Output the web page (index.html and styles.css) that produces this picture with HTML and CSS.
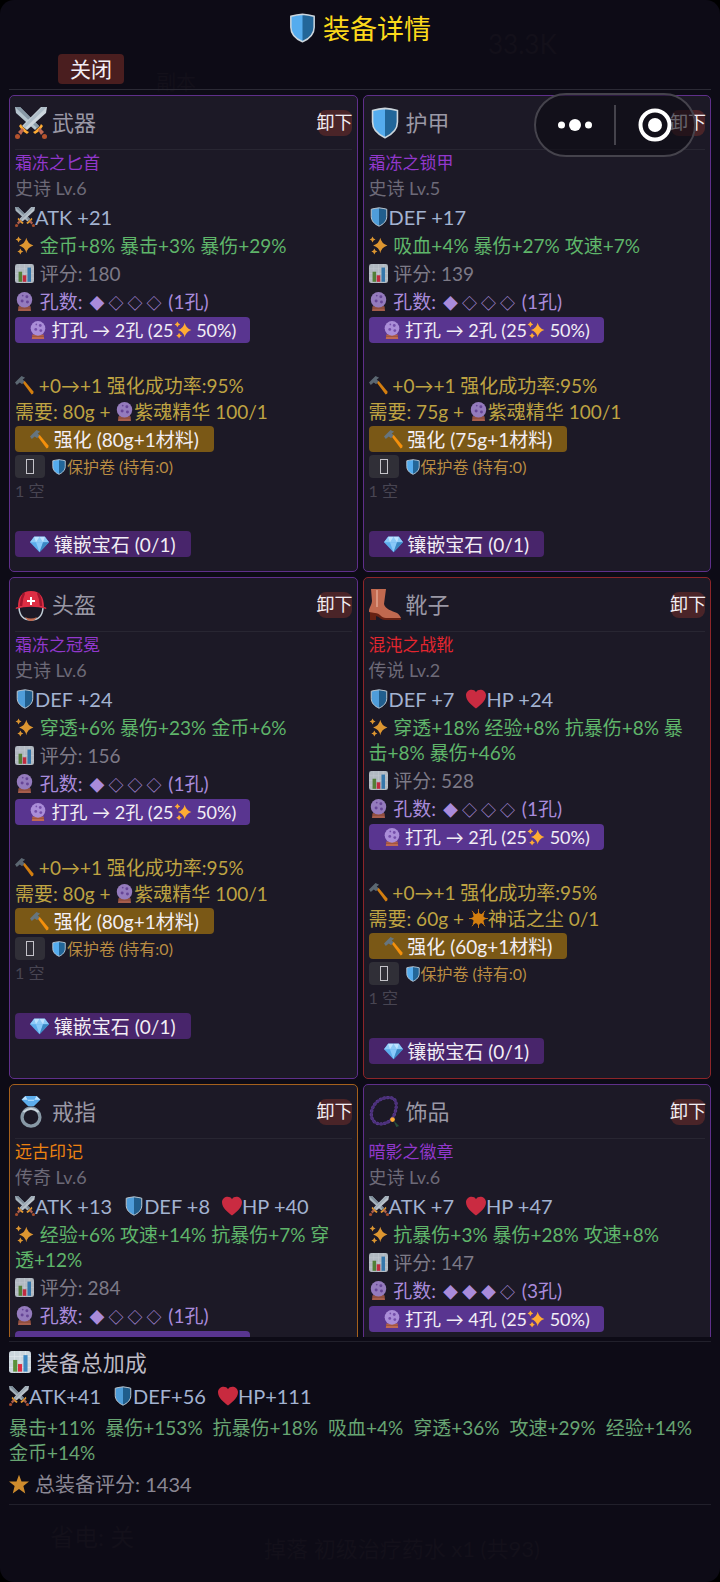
FILE: index.html
```html
<!DOCTYPE html>
<html lang="zh-CN">
<head>
<meta charset="utf-8">
<meta name="viewport" content="width=device-width, initial-scale=1">
<title>装备详情</title>
<link rel="stylesheet" href="styles.css">
</head>
<body>
<svg class="sprite" aria-hidden="true">
  <symbol id="shield" viewBox="0 0 32 36"><path d="M16 1.500C11 2 6 3 2 4v13c0 8 6 14 14 17.500C24 31 30 25 30 17V4c-4-1-9-2-14-2.500z" fill="#55acee"/><path d="M16 1.500V34.500C24 31 30 25 30 17V4c-4-1-9-2-14-2.500z" fill="#226699"/><path d="M16 1.500C11 2 6 3 2 4v13c0 8 6 14 14 17.500C24 31 30 25 30 17V4c-4-1-9-2-14-2.500z" fill="none" stroke="#ccd6dd" stroke-width="1.800"/></symbol>
  <symbol id="swords" viewBox="0 0 32 32"><path d="M0 0h5l19 19-4 4L1 6z" fill="#b5c5ce"/><path d="M0 0h5l19 19-2 2z" fill="#8899a6"/><path d="M18 25l2-1 5-5 1-2 2 2-2 3-3 3-3 2z" fill="#ffac33"/><path d="M23 23l2-2 4 4-3 3z" fill="#bf6952"/><circle cx="29.500" cy="29.500" r="2.500" fill="#b5522d"/><g transform="matrix(-1 0 0 1 32 0)"><path d="M0 0h6l19 19-5 4L1 6z" fill="#ccd6dd"/><path d="M0 0h5l19 19-2 2z" fill="#aebdc8"/><path d="M18 25l2-1 5-5 1-2 2 2-2 3-3 3-3 2z" fill="#ffac33"/><path d="M23 23l2-2 4 4-3 3z" fill="#bf6952"/><circle cx="29.500" cy="29.500" r="2.500" fill="#b5522d"/></g></symbol>
  <symbol id="helmet" viewBox="0 0 32 32"><path d="M4 19q1 12 12 12t12-12" fill="none" stroke="#c1cdd6" stroke-width="1.500"/><path d="M10 28q6 3 12 0-2 4-6 4t-6-4z" fill="#c1694f"/><path d="M3 18C3 8 7 2 16 2s13 6 13 16c2 0 3 1 2 2-9-3-21-3-30 0-1-1 0-2 2-2z" fill="#dd2e44"/><path d="M9 4c-2 4-3 8-3 13m17-13c2 4 3 8 3 13" stroke="#a0142c" stroke-width="2.500" fill="none"/><path d="M16 8v8M12 12h8" stroke="#fff" stroke-width="2"/></symbol>
  <symbol id="boot" viewBox="0 0 32 32"><path d="M1 18l15 2c3 3 8 5 12 6 3 1 4 2 4 5H16c-4 0-5-3-9-4v4H1z" fill="#662113"/><path d="M2 0q8-1 15 0l-2 15c1 5 8 7 13 9 2 1 3 3 4 5H17c-5 0-6-5-11-5l-6-1c-1-3 3-7 3-11z" fill="#c1694f"/><path d="M8 1v17" stroke="#e0a48e" stroke-width="1.500"/></symbol>
  <symbol id="ring" viewBox="0 0 32 34"><circle cx="16" cy="22.500" r="9.500" fill="none" stroke="#8899a6" stroke-width="3.500"/><path d="M8 17q8-7 16 0" fill="none" stroke="#ccd6dd" stroke-width="2"/><path d="M10 0h12l4 4-7 7h-6L6 4z" fill="#5dadec"/><path d="M10 0l3 5h6l3-5 4 4H6z" fill="#bde3ff"/></symbol>
  <symbol id="beads" viewBox="0 0 32 34"><path d="M23 25C12 34 1 29 1.500 19 2 7 13 0 23 2c8 2 5 16 0 23z" fill="none" stroke="#5e3d96" stroke-width="3.500" stroke-linecap="round" stroke-dasharray=".5 3.500"/><path d="M23 25C12 34 1 29 1.500 19 2 7 13 0 23 2c8 2 5 16 0 23z" fill="none" stroke="#4b307a" stroke-width="2"/><path d="M25 26l6 6-3 1z" fill="#28513c"/><circle cx="24" cy="25" r="2.500" fill="#ffac33"/></symbol>
  <symbol id="heart" viewBox="0 0 32 32"><path d="M16 31C9 26 0 19 0 10 0 1 12-2 16 5c4-7 16-4 16 5 0 9-9 16-16 21z" fill="#dd2e44"/></symbol>
  <symbol id="sparkle" viewBox="0 0 32 32"><path d="M19 3q2 10 12 13-10 3-12 13-2-10-12-13Q17 13 19 3zM6 1q1 4 5 5-4 1-5 5-1-4-5-5 4-1 5-5zM9 21q1 4 5 5-4 1-5 5-1-4-5-5 4-1 5-5z" fill="#ffac33"/></symbol>
  <symbol id="chart" viewBox="0 0 32 32"><rect width="32" height="32" rx="4" fill="#ccd6dd"/><path d="M0 8h32M0 16h32M0 24h32M8 0v32M16 0v32M24 0v32" stroke="#e1e8ed"/><path d="M6 13h6v17H6z" fill="#5c913b"/><path d="M13 19h6v11h-6z" fill="#dd2e44"/><path d="M21 6h6v24h-6z" fill="#3b88c3"/></symbol>
  <symbol id="orb" viewBox="0 0 32 32"><path d="M6 24h20l1 8H5z" fill="#bf6952"/><path d="M5 27h22" stroke="#8a4633" stroke-width="1.500"/><circle cx="16" cy="13" r="13" fill="#aa8dd8"/><circle cx="12" cy="15" r="2.500" fill="#744eaa"/><circle cx="20" cy="8" r="2.500" fill="#744eaa"/><circle cx="21" cy="17" r="2.500" fill="#744eaa"/><circle cx="13" cy="6" r="1.500" fill="#744eaa"/></symbol>
  <symbol id="hammer" viewBox="0 0 32 32"><path d="M13 11l3-3 15 18q1 4-3 5z" fill="#f4900c"/><path d="M0 11l5-5 6-6 6 3-4 3 3 3-4 5-4-3-5 4z" fill="#66757f"/></symbol>
  <symbol id="gem" viewBox="0 0 32 28"><path d="M7 1h18l7 9-16 17L0 10z" fill="#5dadec"/><path d="M7 1h18l7 9H0z" fill="#8ccaf7"/><path d="M7 1l3 9 6-9 6 9 3-9z" fill="#bde3ff"/><path d="M10 10h12l-6 17z" fill="#88c9f9"/><path d="M22 10h10L16 27z" fill="#3b88c3"/></symbol>
  <symbol id="star" viewBox="0 0 32 32"><path d="M16 1l4 11 12 0-9 7 3 12-10-7-10 7 3-12-9-7 12 0z" fill="#ffac33"/></symbol>
  <symbol id="burst" viewBox="0 0 32 32"><circle cx="16" cy="16" r="9" fill="#f4900c"/><path d="M16 4l3 6 7-4-2 7 6 3-6 3 2 7-7-3-3 6-3-6-7 3 2-7-6-3 6-3-2-7 7 4z" fill="#f4900c"/><path d="M16 0v32M0 16h32M5 3l22 26M27 3L5 29" stroke="#f4900c" stroke-width="1.500"/></symbol>
</svg>

<main class="app">
  <div class="backdrop" aria-hidden="true">
    <span class="ghost ghost-gold">33.3K</span>
    <span class="ghost ghost-tab">副本</span>
    <span class="ghost ghost-power">省电: 关</span>
    <span class="ghost ghost-log">掉落 初级治疗药水 x1 (共93)</span>
  </div>

  <header class="top">
    <h1 class="title"><svg class="icon"><use href="#shield"/></svg> 装备详情</h1>
    <button class="close" type="button">关闭</button>
  </header>

  <section class="list">
    <article class="card epic">
      <header class="head"><svg class="slot"><use href="#swords"/></svg><h2 class="kind">武器</h2><button class="unequip" type="button">卸下</button></header>
      <h3 class="name">霜冻之匕首</h3>
      <p class="level">史诗 Lv.6</p>
      <p class="stats"><span><svg class="icon"><use href="#swords"/></svg>ATK +21</span></p>
      <p class="affix"><svg class="icon"><use href="#sparkle"/></svg> 金币+8% 暴击+3% 暴伤+29%</p>
      <p class="score"><svg class="icon"><use href="#chart"/></svg> 评分: 180</p>
      <p class="holes"><svg class="icon"><use href="#orb"/></svg> 孔数: <span class="pips"><i>◆</i><i>◇</i><i>◇</i><i>◇</i></span> (1孔)</p>
      <button class="btn punch" type="button"><svg class="icon"><use href="#orb"/></svg> 打孔 → 2孔 (25<svg class="icon"><use href="#sparkle"/></svg> 50%)</button>
      <p class="rate"><svg class="icon"><use href="#hammer"/></svg> +0→+1 强化成功率:95%</p>
      <p class="need">需要: 80g + <svg class="icon"><use href="#orb"/></svg>紫魂精华 100/1</p>
      <button class="btn forge" type="button"><svg class="icon"><use href="#hammer"/></svg> 强化 (80g+1材料)</button>
      <label class="protect"><input class="tick" type="checkbox"><span><svg class="icon"><use href="#shield"/></svg>保护卷 (持有:0)</span></label>
      <p class="empty">1 空</p>
      <button class="btn inlay" type="button"><svg class="icon"><use href="#gem"/></svg> 镶嵌宝石 (0/1)</button>
    </article>

    <article class="card epic">
      <header class="head"><svg class="slot"><use href="#shield"/></svg><h2 class="kind">护甲</h2><button class="unequip" type="button">卸下</button></header>
      <h3 class="name">霜冻之锁甲</h3>
      <p class="level">史诗 Lv.5</p>
      <p class="stats"><span><svg class="icon"><use href="#shield"/></svg>DEF +17</span></p>
      <p class="affix"><svg class="icon"><use href="#sparkle"/></svg> 吸血+4% 暴伤+27% 攻速+7%</p>
      <p class="score"><svg class="icon"><use href="#chart"/></svg> 评分: 139</p>
      <p class="holes"><svg class="icon"><use href="#orb"/></svg> 孔数: <span class="pips"><i>◆</i><i>◇</i><i>◇</i><i>◇</i></span> (1孔)</p>
      <button class="btn punch" type="button"><svg class="icon"><use href="#orb"/></svg> 打孔 → 2孔 (25<svg class="icon"><use href="#sparkle"/></svg> 50%)</button>
      <p class="rate"><svg class="icon"><use href="#hammer"/></svg> +0→+1 强化成功率:95%</p>
      <p class="need">需要: 75g + <svg class="icon"><use href="#orb"/></svg>紫魂精华 100/1</p>
      <button class="btn forge" type="button"><svg class="icon"><use href="#hammer"/></svg> 强化 (75g+1材料)</button>
      <label class="protect"><input class="tick" type="checkbox"><span><svg class="icon"><use href="#shield"/></svg>保护卷 (持有:0)</span></label>
      <p class="empty">1 空</p>
      <button class="btn inlay" type="button"><svg class="icon"><use href="#gem"/></svg> 镶嵌宝石 (0/1)</button>
    </article>

    <article class="card epic">
      <header class="head"><svg class="slot"><use href="#helmet"/></svg><h2 class="kind">头盔</h2><button class="unequip" type="button">卸下</button></header>
      <h3 class="name">霜冻之冠冕</h3>
      <p class="level">史诗 Lv.6</p>
      <p class="stats"><span><svg class="icon"><use href="#shield"/></svg>DEF +24</span></p>
      <p class="affix"><svg class="icon"><use href="#sparkle"/></svg> 穿透+6% 暴伤+23% 金币+6%</p>
      <p class="score"><svg class="icon"><use href="#chart"/></svg> 评分: 156</p>
      <p class="holes"><svg class="icon"><use href="#orb"/></svg> 孔数: <span class="pips"><i>◆</i><i>◇</i><i>◇</i><i>◇</i></span> (1孔)</p>
      <button class="btn punch" type="button"><svg class="icon"><use href="#orb"/></svg> 打孔 → 2孔 (25<svg class="icon"><use href="#sparkle"/></svg> 50%)</button>
      <p class="rate"><svg class="icon"><use href="#hammer"/></svg> +0→+1 强化成功率:95%</p>
      <p class="need">需要: 80g + <svg class="icon"><use href="#orb"/></svg>紫魂精华 100/1</p>
      <button class="btn forge" type="button"><svg class="icon"><use href="#hammer"/></svg> 强化 (80g+1材料)</button>
      <label class="protect"><input class="tick" type="checkbox"><span><svg class="icon"><use href="#shield"/></svg>保护卷 (持有:0)</span></label>
      <p class="empty">1 空</p>
      <button class="btn inlay" type="button"><svg class="icon"><use href="#gem"/></svg> 镶嵌宝石 (0/1)</button>
    </article>

    <article class="card legend">
      <header class="head"><svg class="slot"><use href="#boot"/></svg><h2 class="kind">靴子</h2><button class="unequip" type="button">卸下</button></header>
      <h3 class="name">混沌之战靴</h3>
      <p class="level">传说 Lv.2</p>
      <p class="stats"><span><svg class="icon"><use href="#shield"/></svg>DEF +7</span><span><svg class="icon"><use href="#heart"/></svg>HP +24</span></p>
      <p class="affix"><svg class="icon"><use href="#sparkle"/></svg> 穿透+18% 经验+8% 抗暴伤+8% 暴击+8% 暴伤+46%</p>
      <p class="score"><svg class="icon"><use href="#chart"/></svg> 评分: 528</p>
      <p class="holes"><svg class="icon"><use href="#orb"/></svg> 孔数: <span class="pips"><i>◆</i><i>◇</i><i>◇</i><i>◇</i></span> (1孔)</p>
      <button class="btn punch" type="button"><svg class="icon"><use href="#orb"/></svg> 打孔 → 2孔 (25<svg class="icon"><use href="#sparkle"/></svg> 50%)</button>
      <p class="rate"><svg class="icon"><use href="#hammer"/></svg> +0→+1 强化成功率:95%</p>
      <p class="need">需要: 60g + <svg class="icon"><use href="#burst"/></svg>神话之尘 0/1</p>
      <button class="btn forge" type="button"><svg class="icon"><use href="#hammer"/></svg> 强化 (60g+1材料)</button>
      <label class="protect"><input class="tick" type="checkbox"><span><svg class="icon"><use href="#shield"/></svg>保护卷 (持有:0)</span></label>
      <p class="empty">1 空</p>
      <button class="btn inlay" type="button"><svg class="icon"><use href="#gem"/></svg> 镶嵌宝石 (0/1)</button>
    </article>

    <article class="card relic">
      <header class="head"><svg class="slot"><use href="#ring"/></svg><h2 class="kind">戒指</h2><button class="unequip" type="button">卸下</button></header>
      <h3 class="name">远古印记</h3>
      <p class="level">传奇 Lv.6</p>
      <p class="stats"><span><svg class="icon"><use href="#swords"/></svg>ATK +13</span><span><svg class="icon"><use href="#shield"/></svg>DEF +8</span><span><svg class="icon"><use href="#heart"/></svg>HP +40</span></p>
      <p class="affix"><svg class="icon"><use href="#sparkle"/></svg> 经验+6% 攻速+14% 抗暴伤+7% 穿透+12%</p>
      <p class="score"><svg class="icon"><use href="#chart"/></svg> 评分: 284</p>
      <p class="holes"><svg class="icon"><use href="#orb"/></svg> 孔数: <span class="pips"><i>◆</i><i>◇</i><i>◇</i><i>◇</i></span> (1孔)</p>
      <button class="btn punch" type="button" aria-label="打孔"></button>
    </article>

    <article class="card epic">
      <header class="head"><svg class="slot"><use href="#beads"/></svg><h2 class="kind">饰品</h2><button class="unequip" type="button">卸下</button></header>
      <h3 class="name">暗影之徽章</h3>
      <p class="level">史诗 Lv.6</p>
      <p class="stats"><span><svg class="icon"><use href="#swords"/></svg>ATK +7</span><span><svg class="icon"><use href="#heart"/></svg>HP +47</span></p>
      <p class="affix"><svg class="icon"><use href="#sparkle"/></svg> 抗暴伤+3% 暴伤+28% 攻速+8%</p>
      <p class="score"><svg class="icon"><use href="#chart"/></svg> 评分: 147</p>
      <p class="holes"><svg class="icon"><use href="#orb"/></svg> 孔数: <span class="pips"><i>◆</i><i>◆</i><i>◆</i><i>◇</i></span> (3孔)</p>
      <button class="btn punch" type="button"><svg class="icon"><use href="#orb"/></svg> 打孔 → 4孔 (25<svg class="icon"><use href="#sparkle"/></svg> 50%)</button>
    </article>
  </section>

  <footer class="total">
    <h2 class="total-title"><svg class="icon"><use href="#chart"/></svg> 装备总加成</h2>
    <p class="stats total-stats"><span><svg class="icon"><use href="#swords"/></svg>ATK+41</span><span><svg class="icon"><use href="#shield"/></svg>DEF+56</span><span><svg class="icon"><use href="#heart"/></svg>HP+111</span></p>
    <p class="total-affix"><span>暴击+11%</span><span>暴伤+153%</span><span>抗暴伤+18%</span><span>吸血+4%</span><span>穿透+36%</span><span>攻速+29%</span><span>经验+14%</span><span>金币+14%</span></p>
    <p class="total-score"><svg class="icon"><use href="#star"/></svg> 总装备评分: 1434</p>
  </footer>

  <div class="capsule">
    <button class="cap-btn" type="button" aria-label="更多"><svg width="36" height="34" viewBox="0 0 36 34"><circle cx="4.500" cy="17" r="3.500"/><circle cx="18" cy="17" r="6"/><circle cx="31.500" cy="17" r="3.500"/></svg></button>
    <span class="cap-line"></span>
    <button class="cap-btn" type="button" aria-label="关闭小程序"><svg width="34" height="34" viewBox="0 0 34 34"><circle cx="17" cy="17" r="14.500" fill="none" stroke="#fff" stroke-width="4"/><circle cx="17" cy="17" r="7"/></svg></button>
  </div>
</main>
</body>
</html>
```

FILE: styles.css
```css
* { box-sizing: border-box; }

html { background: #000; }

body {
  margin: 0;
  font-family: Lato, "Noto Sans CJK SC", sans-serif;
  font-size: 19px;
  line-height: 25px;
}

h1, h2, h3, p { margin: 0; font-weight: 400; font-size: inherit; }

button {
  border: 0;
  padding: 0;
  color: #f2eef5;
  font: inherit;
  cursor: pointer;
}

.sprite { position: absolute; width: 0; height: 0; }

.icon {
  width: 1em;
  height: 1em;
  vertical-align: -2px;
}

.app {
  position: relative;
  display: flex;
  flex-direction: column;
  height: 100vh;
  padding: 0 9px;
  overflow: hidden;
  border-radius: 14px;
  background: #0d0b16;
}

/* Dimmed game screen under the panel */
.backdrop { position: absolute; inset: 0; color: #13101a; font-size: 20px; }
.ghost { position: absolute; white-space: nowrap; }
.ghost-gold { left: 488px; top: 32px; font-size: 26px; }
.ghost-tab { left: 156px; top: 70px; }
.ghost-power { left: 50px; top: 1524px; font-size: 24px; }
.ghost-log { left: 264px; top: 1536px; font-size: 22px; }

.top {
  position: relative;
  flex: none;
  padding-bottom: 5px;
  border-bottom: 1px solid #2b2a35;
}

.title {
  padding: 9px 0 5px;
  color: #fcd91b;
  font-size: 27px;
  line-height: 40px;
  text-align: center;
}
.title .icon { height: 30px; vertical-align: -4px; }

.close {
  display: block;
  width: 66px;
  height: 30px;
  margin-left: 49px;
  border-radius: 4px;
  background: #4a1e1f;
  font-size: 21px;
  line-height: 28px;
}

.list {
  position: relative;
  display: grid;
  grid-template-columns: 1fr 1fr;
  gap: 5px;
  align-content: start;
  flex: 1;
  min-height: 0;
  margin-top: 5px;
  overflow: hidden;
}

.card {
  min-width: 0;
  padding: 0 5px 14px;
  border: 1px solid var(--edge);
  border-radius: 5px;
  background: #1c1926;
}
.epic { --edge: #5f2f8a; --tone: #9238cc; }
.legend { --edge: #8c2529; --tone: #e3262f; }
.relic { --edge: #a5601c; --tone: #ec8211; }

.head {
  display: flex;
  align-items: center;
  gap: 5px;
  height: 54px;
  border-bottom: 1px solid #282632;
}
.slot { flex: none; width: 32px; height: 32px; }
.kind { color: #9a98a5; font-size: 22px; }
.unequip {
  display: flex;
  justify-content: center;
  width: 34px;
  height: 26px;
  margin-left: auto;
  border-radius: 8px;
  background: #4a2428;
  font-size: 18px;
  line-height: 24px;
  white-space: nowrap;
}

.name { color: var(--tone); font-size: 17px; }
.level { margin: 1px 0 4px; color: #6d6a78; font-size: 18px; }
.stats {
  display: flex;
  gap: 12px;
  margin-bottom: 3px;
  color: #a3b3d1;
  font-size: 20px;
}
.stats .icon { opacity: .9; }
.affix, .score, .holes { margin-bottom: 3px; }
.affix .icon, .score .icon, .holes .icon { margin-right: 1px; opacity: .85; }
.affix { padding-right: 14px; color: #5fb56a; }
.score { color: #7d7a87; }
.holes { color: #a98bdb; }

.pips { display: inline-flex; line-height: 18px; }
.pips i {
  width: 19px;
  font-size: 15px;
  font-style: normal;
  text-align: center;
}

.btn {
  display: block;
  height: 26px;
  padding: 0 15px;
  border-radius: 4px;
  line-height: 25px;
  white-space: nowrap;
}
.punch { min-width: 235px; padding: 0 14px; background: #593590; font-size: 18px; }
.forge { background: #7a5816; }
.inlay { background: #48256b; }

.rate { margin-top: 30px; color: #bea342; }
.need { margin: 1px 0 2px; color: #bea342; }
.rate .icon, .need .icon { opacity: .85; }

.protect {
  display: flex;
  align-items: center;
  gap: 6px;
  height: 23px;
  margin-top: 3px;
  color: #b98c42;
  font-size: 16px;
}
.tick {
  display: grid;
  place-items: center;
  width: 30px;
  height: 23px;
  margin: 0;
  border-radius: 4px;
  background: #302f37;
  appearance: none;
}
.tick::before {
  width: 6px;
  height: 13px;
  border: 1px solid #c4c3c9;
  content: "";
}
.empty { margin: 1px 0 28px; color: #484552; font-size: 16px; line-height: 24px; }

.total {
  position: relative;
  flex: none;
  margin: 4px 0 77px;
  padding-bottom: 7px;
  border-top: 1px solid #21202b;
  border-bottom: 1px solid #21202b;
}
.total-title { padding: 6px 0; color: #bcbac4; font-size: 22px; line-height: 30px; }
.total-stats { margin-bottom: 6px; }
.total-affix { display: flex; flex-wrap: wrap; column-gap: 10px; color: #67a572; }
.total-score { margin-top: 7px; color: #8a8793; font-size: 20px; }
.total-score .icon { margin-right: 1px; opacity: .8; }

/* Host app menu floating above the page */
.capsule {
  position: absolute;
  top: 93px;
  right: 24px;
  display: grid;
  grid-template-columns: 1fr 2px 1fr;
  align-items: center;
  width: 162px;
  height: 64px;
  border: 2px solid #45434c;
  border-radius: 32px;
  background: rgba(11, 10, 19, .6);
}
.cap-btn { display: grid; place-items: center; background: none; }
.cap-btn svg { fill: #fff; }
.cap-line { height: 40px; background: #45434c; }
```
